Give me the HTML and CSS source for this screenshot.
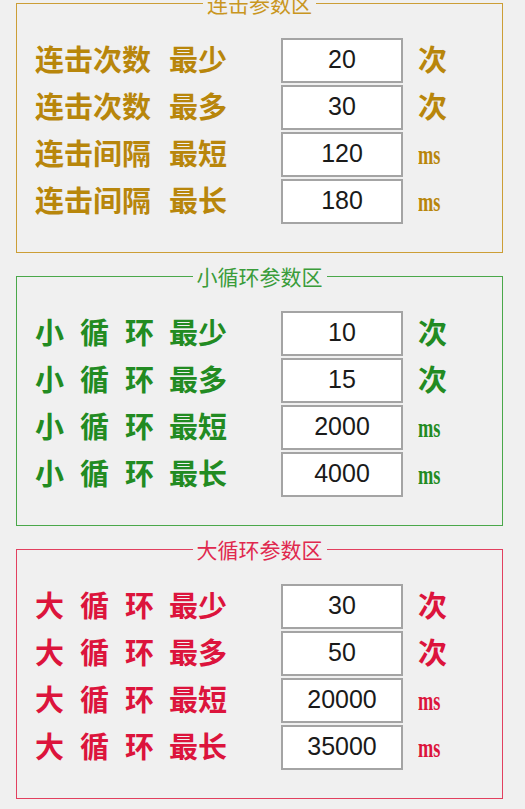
FILE: index.html
```html
<!DOCTYPE html>
<html lang="zh-CN">
<head>
<meta charset="utf-8">
<title>参数设置</title>
<link rel="stylesheet" href="styles.css">
</head>
<body>
<main class="page">
  <fieldset class="group gold">
    <legend>连击参数区</legend>
    <div class="row"><div class="label"><span class="name">连击次数</span><span>最少</span></div><div class="box">20</div><span class="unit">次</span></div>
    <div class="row"><div class="label"><span class="name">连击次数</span><span>最多</span></div><div class="box">30</div><span class="unit">次</span></div>
    <div class="row"><div class="label"><span class="name">连击间隔</span><span>最短</span></div><div class="box">120</div><span class="unit ms">ms</span></div>
    <div class="row"><div class="label"><span class="name">连击间隔</span><span>最长</span></div><div class="box">180</div><span class="unit ms">ms</span></div>
  </fieldset>

  <fieldset class="group green">
    <legend>小循环参数区</legend>
    <div class="row"><div class="label"><span class="name spread"><span>小</span><span>循</span><span>环</span></span><span>最少</span></div><div class="box">10</div><span class="unit">次</span></div>
    <div class="row"><div class="label"><span class="name spread"><span>小</span><span>循</span><span>环</span></span><span>最多</span></div><div class="box">15</div><span class="unit">次</span></div>
    <div class="row"><div class="label"><span class="name spread"><span>小</span><span>循</span><span>环</span></span><span>最短</span></div><div class="box">2000</div><span class="unit ms">ms</span></div>
    <div class="row"><div class="label"><span class="name spread"><span>小</span><span>循</span><span>环</span></span><span>最长</span></div><div class="box">4000</div><span class="unit ms">ms</span></div>
  </fieldset>

  <fieldset class="group red">
    <legend>大循环参数区</legend>
    <div class="row"><div class="label"><span class="name spread"><span>大</span><span>循</span><span>环</span></span><span>最少</span></div><div class="box">30</div><span class="unit">次</span></div>
    <div class="row"><div class="label"><span class="name spread"><span>大</span><span>循</span><span>环</span></span><span>最多</span></div><div class="box">50</div><span class="unit">次</span></div>
    <div class="row"><div class="label"><span class="name spread"><span>大</span><span>循</span><span>环</span></span><span>最短</span></div><div class="box">20000</div><span class="unit ms">ms</span></div>
    <div class="row"><div class="label"><span class="name spread"><span>大</span><span>循</span><span>环</span></span><span>最长</span></div><div class="box">35000</div><span class="unit ms">ms</span></div>
  </fieldset>
</main>
</body>
</html>
```

FILE: styles.css
```css
html, body {
  margin: 0;
  padding: 0;
  background: #f0f0f0;
}

body {
  font-family: "Noto Sans CJK SC", "Noto Sans", sans-serif;
  overflow: hidden;
}

.page {
  display: flex;
  flex-direction: column;
  gap: 13px;
  margin-top: -7px;
  padding-left: 16px;
}

.group {
  box-sizing: border-box;
  width: 487px;
  margin: 0;
  padding: 25px 18px 28px 18px;
  border: 1px solid;
  min-inline-size: 0;
}

.group legend {
  margin: 0 auto;
  padding: 0 4px;
  font-size: 21px;
  line-height: 20px;
  font-weight: 400;
}

.gold { border-color: #cc9e36; color: #b8860b; }
.gold legend { color: #c9961f; }
.green { border-color: #4aa84a; color: #228b22; }
.green legend { color: #3a9c3a; }
.red { border-color: #e2405f; color: #dc143c; }
.red legend { color: #e0284e; }

.row {
  display: flex;
  align-items: center;
  height: 45px;
}

.row + .row {
  margin-top: 2px;
}

.label {
  flex: none;
  width: 246px;
  display: flex;
  align-items: center;
  font-size: 29px;
  font-weight: 700;
  line-height: 1;
  padding-bottom: 5px;
  box-sizing: border-box;
}

.name {
  flex: none;
  width: 134px;
  white-space: nowrap;
}

.spread {
  display: flex;
  gap: 16px;
}

.box {
  flex: none;
  box-sizing: border-box;
  width: 122px;
  height: 45px;
  margin-right: 15px;
  background: #fff;
  border: 2px solid #a4a4a4;
  font-family: "Liberation Sans", Arial, sans-serif;
  font-size: 25px;
  line-height: 39px;
  text-align: center;
  color: #1a1a1a;
  padding-bottom: 2px;
}

.unit {
  font-size: 29px;
  font-weight: 700;
  line-height: 1;
  padding-bottom: 5px;
}

.unit.ms {
  display: inline-block;
  font-family: "Liberation Serif", serif;
  font-size: 27px;
  transform: scaleX(0.68);
  transform-origin: left center;
  padding-bottom: 0;
  padding-top: 1px;
}
```
